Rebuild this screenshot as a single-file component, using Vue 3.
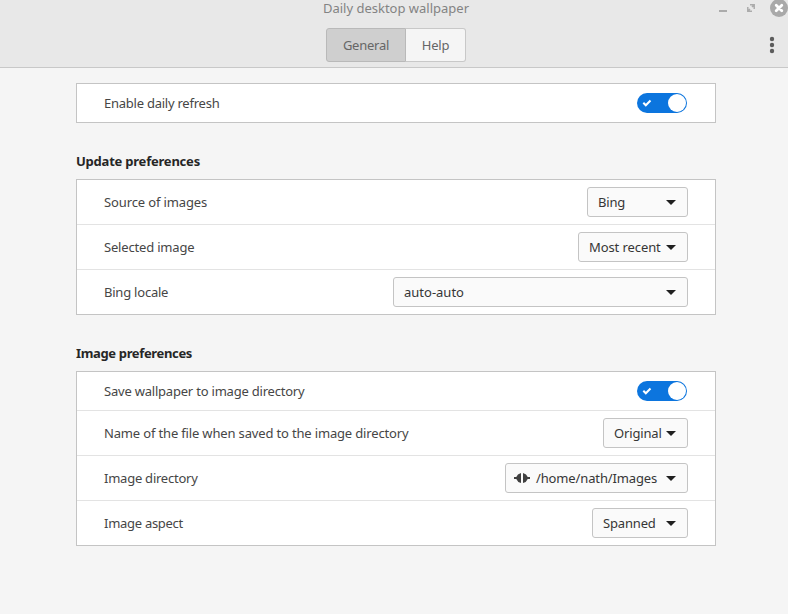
<script setup>
const groups = [
  { title: '', rows: [{ label: 'Enable daily refresh', toggle: true, track: -0.24 }] },
  {
    title: 'Update preferences',
    track: -0.22,
    rows: [
      { label: 'Source of images', track: -0.13, value: 'Bing', valueTrack: -0.2, width: 101 },
      { label: 'Selected image', track: -0.18, value: 'Most recent', valueTrack: -0.09, width: 110 },
      { label: 'Bing locale', track: -0.22, value: 'auto-auto', valueTrack: 0, width: 295 },
    ],
  },
  {
    title: 'Image preferences',
    track: -0.35,
    rows: [
      { label: 'Save wallpaper to image directory', track: -0.21, toggle: true },
      { label: 'Name of the file when saved to the image directory', track: -0.16, value: 'Original', valueTrack: -0.16, width: 85 },
      { label: 'Image directory', track: -0.24, value: '/home/nath/Images', valueTrack: -0.13, width: 183, icon: true },
      { label: 'Image aspect', track: -0.28, value: 'Spanned', valueTrack: -0.16, width: 96 },
    ],
  },
]
const spacing = (n) => ({ letterSpacing: `${n || 0}px` })
</script>

<template>
  <div class="window">
    <header class="header">
      <div class="title">Daily desktop wallpaper</div>
      <svg class="controls" width="75" height="18" viewBox="0 0 75 18">
        <rect x="6" y="10" width="8" height="2" fill="#ababab" />
        <path d="M37 4.800h4.200V9M41 5l-2 2M34.800 7v4.200H39M35 11l2-2" fill="none" stroke="#ababab" stroke-width="1.500" />
        <circle cx="66" cy="8" r="9" fill="#a9a9a9" />
        <path d="M63.200 5.200l5.600 5.600M68.800 5.200l-5.600 5.600" stroke="#fff" stroke-width="2.800" stroke-linecap="round" />
      </svg>
      <div class="tabs">
        <button class="tab active">General</button>
        <button class="tab">Help</button>
      </div>
      <svg class="menu" width="6" height="18" viewBox="0 0 6 18" fill="#5c5c5c">
        <circle cx="3" cy="3" r="2.200" /><circle cx="3" cy="9" r="2.200" /><circle cx="3" cy="15" r="2.200" />
      </svg>
    </header>
    <main class="content">
      <section v-for="g in groups" :key="g.title" class="group">
        <h2 v-if="g.title" :style="spacing(g.track)">{{ g.title }}</h2>
        <div class="card">
          <div v-for="r in g.rows" :key="r.label" class="row" :class="{ short: r.toggle }">
            <span class="label" :style="spacing(r.track)">{{ r.label }}</span>
            <span v-if="r.toggle" class="switch">
              <svg width="10" height="8" viewBox="0 0 10 8">
                <path d="M1.300 3.800L3.800 6.300L8.500 1.500" fill="none" stroke="#fff" stroke-width="2" />
              </svg>
              <span class="knob"></span>
            </span>
            <button v-else class="select" :style="{ width: r.width + 'px' }">
              <svg v-if="r.icon" class="folder" width="16" height="10" viewBox="0 0 16 10" fill="#404040">
                <path d="M0 4h2.300Q3.300 1 7 0v10Q3.300 9 2.300 6H0zM16 4h-2.300Q12.700 1 9 0v10q3.700-1 4.700-4H16z" />
              </svg>
              <span :style="spacing(r.valueTrack)">{{ r.value }}</span>
              <svg class="arrow" width="10" height="5" viewBox="0 0 10 5"><path d="M0 0h10L5 5z" fill="#202020" /></svg>
            </button>
          </div>
        </div>
      </section>
    </main>
  </div>
</template>

<style>
body { background: #f5f5f5; overflow: hidden; }
</style>

<style scoped>
.window { width: 788px; height: 614px; box-sizing: border-box; background: #f5f5f5; font: 13px/18px "Noto Sans", sans-serif; color: #464646; overflow: hidden; }
.header { position: relative; height: 68px; box-sizing: border-box; background: #e8e8e8; border-bottom: 1px solid #c8c8c8; padding: 0 0 0 4px; }
.title { height: 28px; line-height: 17px; text-align: center; color: #838383; }
.controls { position: absolute; right: 0; top: 0; width: 75px; }
.tabs { display: flex; width: 140px; height: 34px; margin: 0 auto; }
.tab { font: inherit; letter-spacing: -0.25px; color: #666; background: #f5f5f5; border: 1px solid #c8c8c8; border-left: 0; border-radius: 0 3px 3px 0; width: 60px; padding: 0; }
.tab.active { width: 80px; background: #cfcfcf; border: 1px solid #b9b9b9; border-radius: 3px 0 0 3px; }
.menu { position: absolute; right: 13px; top: 36px; }
.content { padding: 15px 72px 0 76px; }
.group + .group { padding-top: 29px; }
h2 { margin: 0 0 9px; font: bold 13px/18px "Noto Sans", sans-serif; color: #262626; }
.card { background: #fff; border: 1px solid #c4c4c4; }
.row { display: flex; align-items: center; justify-content: space-between; height: 44px; padding: 0 27px; }
.row.short { height: 38px; padding-right: 28px; }
.row + .row { border-top: 1px solid #e3e3e3; }
.label { white-space: nowrap; }
.switch { display: flex; align-items: center; justify-content: space-between; box-sizing: border-box; width: 50px; height: 20px; padding: 0 1px 0 5px; border-radius: 10px; background: #0c75de; }
.knob { width: 18px; height: 18px; border-radius: 50%; background: #fff; }
.select { display: flex; align-items: center; box-sizing: border-box; height: 30px; padding: 0 11px 0 10px; font: inherit; color: #363636; background: #fafafa; border: 1px solid #c4c4c4; border-radius: 3px; white-space: nowrap; }
.folder { margin: 0 6px 0 -2px; flex: none; }
.arrow { margin-left: auto; flex: none; }
</style>
